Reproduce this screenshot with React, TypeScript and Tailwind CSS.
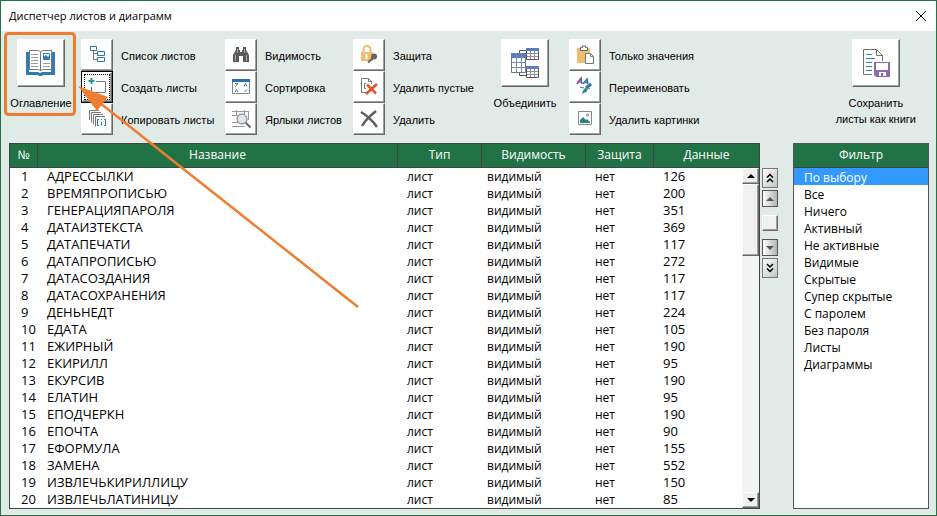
import { useState } from "react";
import type { ReactNode } from "react";

const sheets: [string, number][] = [
  ["АДРЕССЫЛКИ", 126],
  ["ВРЕМЯПРОПИСЬЮ", 200],
  ["ГЕНЕРАЦИЯПАРОЛЯ", 351],
  ["ДАТАИЗТЕКСТА", 369],
  ["ДАТАПЕЧАТИ", 117],
  ["ДАТАПРОПИСЬЮ", 272],
  ["ДАТАСОЗДАНИЯ", 117],
  ["ДАТАСОХРАНЕНИЯ", 117],
  ["ДЕНЬНЕДТ", 224],
  ["ЕДАТА", 105],
  ["ЕЖИРНЫЙ", 190],
  ["ЕКИРИЛЛ", 95],
  ["ЕКУРСИВ", 190],
  ["ЕЛАТИН", 95],
  ["ЕПОДЧЕРКН", 190],
  ["ЕПОЧТА", 90],
  ["ЕФОРМУЛА", 155],
  ["ЗАМЕНА", 552],
  ["ИЗВЛЕЧЬКИРИЛЛИЦУ", 150],
  ["ИЗВЛЕЧЬЛАТИНИЦУ", 85],
];

const filters = [
  "По выбору",
  "Все",
  "Ничего",
  "Активный",
  "Не активные",
  "Видимые",
  "Скрытые",
  "Супер скрытые",
  "С паролем",
  "Без пароля",
  "Листы",
  "Диаграммы",
];

const raised =
  "border border-t-white border-l-white border-r-[#696969] border-b-[#696969] shadow-[inset_-1px_-1px_0_#a0a0a0]";

function Icon({ size = 24, children }: { size?: number; children: ReactNode }) {
  return (
    <svg width={size} height={size} viewBox={`0 0 ${size} ${size}`} fill="none" aria-hidden="true">
      {children}
    </svg>
  );
}

function BookIcon() {
  return (
    <Icon size={32}>
      <path d="M1 5h3v20h9l2 1 2-1h9V5h4v23H18l-1 1h-3l-1-1H1z" fill="#2e7db0" />
      <path d="M4.500 3.500h8c1.500 0 2.500.5 3 1.500v19c-.8-1-1.500-1.500-3-1.500h-8zM26.500 3.500h-8c-1.500 0-2.500.5-3 1.500v19c.8-1 1.500-1.500 3-1.500h8z" fill="#fff" stroke="#777" />
      <path d="M6 7.500h7M6 10.500h7M6 13.500h7M6 16.500h7M6 19.500h7M18 16.500h7M18 19.500h7" stroke="#9a9a9a" />
      <path d="M18.500 6.500h6v6h-6z" stroke="#2e7db0" />
      <path d="M19 12V9.500L21 8l2 2 1-1v3z" fill="#2e7db0" />
    </Icon>
  );
}

function TreeIcon() {
  return (
    <Icon>
      <path d="M5.500 3.500h6v4h-6zM12.500 8.500h7v4h-7zM12.500 14.500h7v4h-7z" stroke="#2e75a8" />
      <path d="M8.500 8v8.500h4M8.500 10.500h4" stroke="#777" />
    </Icon>
  );
}

function CreateIcon() {
  return (
    <Icon>
      <path d="M11 6.500h9.500v11h-14V12" stroke="#777" />
      <path d="M6.500 3v6M3.500 6h6" stroke="#21998a" strokeWidth="2" />
    </Icon>
  );
}

function CopyIcon() {
  return (
    <Icon>
      <path d="M4.500 13V3.500H14M6.500 15.500v-10H16M8.500 17.500v-10H18" stroke="#777" />
      <path d="M10.500 19.500v-10H20" stroke="#777" />
      <path d="M14 12.500h-1.500v6H14M19 12.500h1.500v6H19M16.500 14.500v4M16.500 12v1" stroke="#2e75a8" />
    </Icon>
  );
}

function BinocularsIcon() {
  return (
    <Icon>
      <path d="M7 4h3v3h1v2h2V7h1V4h3v3l3 5v7h-6v-6h-4v6H4v-7l3-5z" fill="#5a5a5a" />
      <path d="M6.500 12v6M17.500 12v6M8.500 6v4M15.500 6v4" stroke="#aaa" />
    </Icon>
  );
}

function SortIcon() {
  return (
    <Icon>
      <path d="M3.500 4.500h17v14h-17z" stroke="#858585" />
      <path d="M3 4h18v3H3z" fill="#2e6cab" />
      <path d="M6 8.500h3l-2.500 3M15 11.500l1.500-3 1.500 3M6 17l1.500-2.500L9 17M18 14.500L15.500 17" stroke="#3c75ae" />
    </Icon>
  );
}

function SearchSheetsIcon() {
  return (
    <Icon>
      <path d="M3 4.500h17M3 8.500h6M3 15.500h6M3 19.500h13M7.500 3v6M15.500 3v4M19.500 4v9" stroke="#999" />
      <circle cx="13" cy="12" r="5" fill="#dbe7ec" stroke="#777" />
      <path d="M16.500 15.500l5 5" stroke="#666" strokeWidth="2" />
    </Icon>
  );
}

function LockIcon() {
  return (
    <Icon>
      <path d="M6.500 9V6.500a3.500 3.500 0 0 1 7 0V9" stroke="#efbd70" strokeWidth="2" />
      <path d="M4 9h12v9H4z" fill="#f0bd72" />
      <path d="M9.500 11v5" stroke="#fff" strokeWidth="2" />
      <circle cx="17" cy="13.500" r="3" fill="#666" />
      <path d="M15.500 15.500L11 19.500" stroke="#666" strokeWidth="2" />
    </Icon>
  );
}

function DeleteEmptyIcon() {
  return (
    <Icon>
      <path d="M12 17.500H4.500v-14h7l3 3V9M11.500 3.500v3h3" stroke="#777" />
      <path d="M9 8.500H7.500v5H9" stroke="#777" />
      <path d="M10 9.500l9 9M20 9l-11 10" stroke="#e0512c" strokeWidth="2.500" />
    </Icon>
  );
}

function DeleteIcon() {
  return (
    <Icon>
      <path d="M4 5c5 3 11 8 16 15M19 4C14 8 9 12 5 19" stroke="#606060" strokeWidth="2.500" />
    </Icon>
  );
}

function MergeIcon() {
  return (
    <Icon size={32}>
      <path d="M10.500 6V3.500H17M10.500 26v2.500H17" stroke="#555" />
      <path d="M2.500 6.500h14v19h-14z" fill="#fff" stroke="#66788f" />
      <path d="M2 6h15v5H2z" fill="#5a7fba" />
      <path d="M7.500 6v19M12.500 6v19M3 15.500h13M3 20.500h13" stroke="#7b8ca5" />
      {[1, 19].map((y) => (
        <g key={y} transform={`translate(17 ${y})`}>
          <path d="M.5.5h12v11H.5z" fill="#fff" stroke="#555" />
          <path d="M0 0h13v3H0z" fill="#5a7fba" />
          <path d="M4.500 3v8M8.500 3v8M1 5.500h11M1 8.500h11" stroke="#8a93a0" />
        </g>
      ))}
    </Icon>
  );
}

function PasteIcon() {
  return (
    <Icon>
      <path d="M4 5h13v15H4z" fill="#efbd70" />
      <path d="M7.500 7.500v-3h2V3h3v1.500h2v3z" fill="#fff" stroke="#666" />
      <path d="M12.500 10.500h5l3 3v7h-8z" fill="#fff" stroke="#777" />
      <path d="M17.500 10.500v3h3" stroke="#777" />
    </Icon>
  );
}

function RenameIcon() {
  return (
    <Icon>
      <path d="M4 9l4-6 1 6M5.500 7h3" stroke="#80519a" strokeWidth="1.500" />
      <path d="M10 9l4-5 1 5M11.500 7.500h3" stroke="#2e75a8" strokeWidth="1.500" />
      <path d="M18 9l-5 4" stroke="#2e75a8" strokeWidth="3" />
      <path d="M12 13l-2 3-1 3 4-2 2-3z" fill="#24877e" />
      <path d="M7 12l4 1M15 13l2 1" stroke="#2e75a8" />
    </Icon>
  );
}

function PictureIcon() {
  return (
    <Icon>
      <path d="M5.500 4.500h13v13h-13z" stroke="#858585" />
      <path d="M7 16v-3l3-3 3 3 1-1 3 3v1z" fill="#27857c" />
      <circle cx="14.500" cy="8" r="1" stroke="#777" />
    </Icon>
  );
}

function SaveIcon() {
  return (
    <Icon size={32}>
      <path d="M12 27.500H3.500v-25h13l6 6V14M16.500 2.500v6h6" stroke="#707070" />
      <path d="M6 7.500h6M6 11.500h9M6 15.500h6M6 19.500h6M6 23.500h6" stroke="#2e82a8" />
      <path d="M14 15h16v15H16l-2-2z" fill="#8e6bb0" />
      <path d="M16 16h12v7H16zM19 25h7v4h-7z" fill="#fff" />
      <path d="M21 26h2v3h-2z" fill="#8e6bb0" />
    </Icon>
  );
}

function ToolGroup({ items }: { items: { label: string; icon: ReactNode; focused?: boolean }[] }) {
  return (
    <div className="flex shrink-0 flex-col">
      {items.map(({ label, icon, focused }) => (
        <button key={label} type="button" className="flex h-8 items-center gap-2 text-left whitespace-nowrap">
          {focused ? (
            <span className="grid size-8 place-items-center border border-black bg-white">
              <span className={`grid size-[30px] place-items-center ${raised}`}>
                <span className="grid size-[26px] place-items-center border border-dotted border-black">{icon}</span>
              </span>
            </span>
          ) : (
            <span className={`grid size-8 place-items-center bg-white ${raised}`}>{icon}</span>
          )}
          <span className="pt-0.5">{label}</span>
        </button>
      ))}
    </div>
  );
}

function BigTool({ icon, children }: { icon: ReactNode; children: ReactNode }) {
  return (
    <button type="button" className="flex shrink-0 flex-col items-center gap-2 text-center whitespace-nowrap">
      <span className={`grid size-12 place-items-center bg-white ${raised}`}>{icon}</span>
      <span className="leading-4">{children}</span>
    </button>
  );
}

function Triangle({ down }: { down?: boolean }) {
  return (
    <svg width="8" height="4" viewBox="0 0 8 4" fill="currentColor" aria-hidden="true">
      <path d={down ? "M0 0h8L4 4z" : "M0 4h8L4 0z"} />
    </svg>
  );
}

function Chevrons({ down }: { down?: boolean }) {
  return (
    <svg width="8" height="10" viewBox="0 0 8 10" fill="none" stroke="#000" strokeWidth="1.500" aria-hidden="true">
      <path d={down ? "M1 1l3 3 3-3M1 5.500l3 3 3-3" : "M1 4.500l3-3 3 3M1 9l3-3 3 3"} />
    </svg>
  );
}

function Scrollbar() {
  return (
    <div className="absolute top-6 right-0 bottom-0 flex w-[17px] flex-col bg-[#f4f4f4]">
      <button type="button" aria-label="Вверх" className={`grid h-4 place-items-center bg-[#f0f0f0] ${raised}`}>
        <Triangle />
      </button>
      <div className={`h-18 bg-[#f0f0f0] ${raised}`} />
      <button type="button" aria-label="Вниз" className={`mt-auto grid h-4 place-items-center bg-[#f0f0f0] ${raised}`}>
        <Triangle down />
      </button>
    </div>
  );
}

function SheetTable() {
  return (
    <div className="relative min-w-0 flex-1 border border-[#444] bg-white">
      <table className="w-full table-fixed border-separate border-spacing-0">
        <colgroup>
          <col className="w-[28px]" />
          <col />
          <col className="w-[84px]" />
          <col className="w-[104px]" />
          <col className="w-[68px]" />
          <col className="w-[105px]" />
        </colgroup>
        <thead className="bg-[#217346] text-white">
          <tr>
            {["№", "Название", "Тип", "Видимость", "Защита", "Данные"].map((name) => (
              <th
                key={name}
                scope="col"
                className="h-6 border-r border-b border-[#444] p-0 pb-0.5 text-center leading-4 font-normal last:border-r-0"
              >
                {name}
              </th>
            ))}
          </tr>
        </thead>
        <tbody>
          {sheets.map(([name, data], i) => (
            <tr key={name} className="h-[17px] leading-[15px]">
              <td className="p-0 pt-px pl-[11px] align-baseline text-[13px]">{i + 1}</td>
              <td className="p-0 pt-px pl-[9px] align-baseline text-[13px]">{name}</td>
              <td className="p-0 pt-px pl-[9px] align-baseline">лист</td>
              <td className="p-0 pt-px pl-[5px] align-baseline">видимый</td>
              <td className="p-0 pt-px pl-[9px] align-baseline">нет</td>
              <td className="p-0 pt-px pl-[9px] align-baseline text-[13px]">{data}</td>
            </tr>
          ))}
        </tbody>
      </table>
      <Scrollbar />
    </div>
  );
}

function MoveButtons() {
  const double = "grid h-5 place-items-center border border-[#777] bg-linear-to-br from-white to-[#c4c4c4]";
  const single = "grid h-[17px] place-items-center border border-[#555] bg-linear-to-r from-white to-[#b4b4b4] text-[#555]";
  return (
    <div className="flex w-4 shrink-0 flex-col gap-2 pt-[25px]">
      <div className="flex flex-col gap-0.5">
        <button type="button" aria-label="В начало" className={double}>
          <Chevrons />
        </button>
        <button type="button" aria-label="Выше" className={single}>
          <Triangle />
        </button>
      </div>
      <button type="button" aria-label="Выбрать" className={`h-4 bg-[#f0f0f0] ${raised}`} />
      <div className="flex flex-col gap-0.5">
        <button type="button" aria-label="Ниже" className={single}>
          <Triangle down />
        </button>
        <button type="button" aria-label="В конец" className={double}>
          <Chevrons down />
        </button>
      </div>
    </div>
  );
}

function FilterList() {
  const [selected, setSelected] = useState(filters[0]);
  return (
    <div className="w-[136px] shrink-0 border border-[#555] bg-white">
      <h2 className="flex h-6 items-center justify-center border-b border-[#444] bg-[#217346] pb-0.5 leading-4 text-white">
        Фильтр
      </h2>
      <div role="listbox" aria-label="Фильтр">
        {filters.map((name) => (
          <button
            key={name}
            type="button"
            role="option"
            aria-selected={name === selected}
            onClick={() => setSelected(name)}
            className={`flex h-[17px] w-full items-end pl-[10px] text-left leading-[15px] ${name === selected ? "bg-[#3399ff] text-white" : ""}`}
          >
            {name}
          </button>
        ))}
      </div>
    </div>
  );
}

export default function App() {
  return (
    <div className="relative flex min-h-screen flex-col overflow-hidden border border-[#217346] bg-[#e0eae6] text-black">
      <header className="flex h-[30px] items-center justify-between bg-white pr-[9px] pl-2 font-['Open_Sans',sans-serif] text-[11px]">
        <h1>Диспетчер листов и диаграмм</h1>
        <button type="button" aria-label="Закрыть" className="grid size-3 place-items-center">
          <svg width="12" height="12" viewBox="0 0 12 12" stroke="#000" aria-hidden="true">
            <path d="M1 1l10 10M11 1L1 11" />
          </svg>
        </button>
      </header>

      <div className="flex items-start pt-2 pr-5 pl-2 font-['Liberation_Sans',Arial,sans-serif] text-[11px]">
        <div className="flex w-16 justify-center">
          <BigTool icon={<BookIcon />}>Оглавление</BigTool>
        </div>
        <div className="ml-2 flex">
          <div className="w-36">
            <ToolGroup
              items={[
                { label: "Список листов", icon: <TreeIcon /> },
                { label: "Создать листы", icon: <CreateIcon />, focused: true },
                { label: "Копировать листы", icon: <CopyIcon /> },
              ]}
            />
          </div>
          <div className="w-32">
            <ToolGroup
              items={[
                { label: "Видимость", icon: <BinocularsIcon /> },
                { label: "Сортировка", icon: <SortIcon /> },
                { label: "Ярлыки листов", icon: <SearchSheetsIcon /> },
              ]}
            />
          </div>
          <div className="w-36">
            <ToolGroup
              items={[
                { label: "Защита", icon: <LockIcon /> },
                { label: "Удалить пустые", icon: <DeleteEmptyIcon /> },
                { label: "Удалить", icon: <DeleteIcon /> },
              ]}
            />
          </div>
        </div>
        <div className="mr-4 flex w-14 justify-center">
          <BigTool icon={<MergeIcon />}>Объединить</BigTool>
        </div>
        <ToolGroup
          items={[
            { label: "Только значения", icon: <PasteIcon /> },
            { label: "Переименовать", icon: <RenameIcon /> },
            { label: "Удалить картинки", icon: <PictureIcon /> },
          ]}
        />
        <div className="ml-auto">
          <BigTool icon={<SaveIcon />}>
            Сохранить
            <br />
            листы как книги
          </BigTool>
        </div>
      </div>

      <main className="flex flex-1 items-stretch pt-2 pr-[7px] pb-1.5 pl-2 font-['Open_Sans',sans-serif] text-[12px]">
        <SheetTable />
        <div className="ml-0.5 flex">
          <MoveButtons />
        </div>
        <div className="ml-[15px] flex">
          <FilterList />
        </div>
      </main>

      <svg className="pointer-events-none absolute top-0 left-0" width="370" height="320" viewBox="1 1 370 320" fill="none" aria-hidden="true">
        <rect x="5.500" y="33.500" width="69" height="81" rx="3" stroke="#ed7d31" strokeWidth="3" />
        <path d="M100 103L358 307" stroke="#ed7d31" strokeWidth="2.500" />
        <path d="M78 86l30 11-11 14z" fill="#ed7d31" />
      </svg>
    </div>
  );
}
